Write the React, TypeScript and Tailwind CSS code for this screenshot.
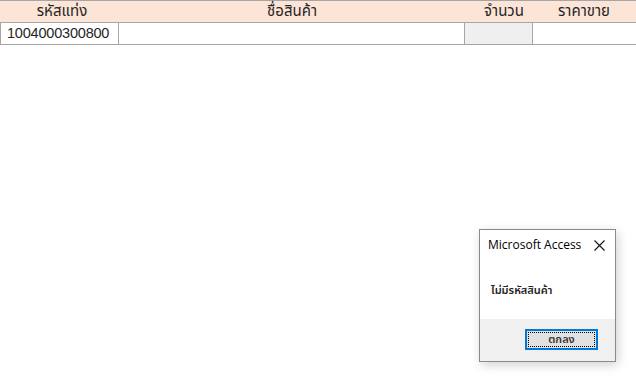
const thai = { fontFamily: 'Tahoma, "Noto Sans Thai", "Noto Sans", "DejaVu Sans", sans-serif' }

export default function App() {
  return (
    <div className="relative w-[636px] h-[385px] bg-white overflow-hidden" style={thai}>
      {/* header row */}
      <div className="flex h-[23px] border-y border-[#a6a6a6] bg-[#fce4d6] text-[15px] leading-[21px] text-[#262626]">
        <div className="w-[118px] text-center pl-[6px]">รหัสแท่ง</div>
        <div className="w-[346px] text-center pl-[2px]">ชื่อสินค้า</div>
        <div className="w-[68px] text-center pl-[12px]">จำนวน</div>
        <div className="w-[104px] text-center">ราคาขาย</div>
      </div>
      {/* data row */}
      <div className="flex h-[22px] border-b border-[#a6a6a6] text-[15px] leading-[21px] text-[#262626]">
        <div
          className="w-[118px] border-l border-[#a6a6a6] pl-[6px] text-[14.5px] tracking-[-0.2px]"
          style={{ fontFamily: '"Liberation Sans", Arial, sans-serif' }}
        >
          1004000300800
        </div>
        <div className="w-[346px] border-l border-[#a6a6a6]"></div>
        <div className="w-[68px] border-l border-[#a6a6a6] bg-[#efefef]"></div>
        <div className="w-[104px] border-l border-[#a6a6a6]"></div>
      </div>

      {/* message box */}
      <div className="absolute left-[479px] top-[229px] w-[137px] h-[133px] border border-[#8a8a8a] bg-white flex flex-col shadow-[2px_3px_10px_rgba(0,0,0,0.18)]">
        <div className="flex items-center justify-between h-[29px] pl-[8px] pr-[10px] pt-[1px]">
          <span className="text-[12px] text-black" style={{ fontFamily: '"Open Sans", "Noto Sans", sans-serif' }}>
            Microsoft Access
          </span>
          <svg width="11" height="11" viewBox="0 0 11 11" className="mt-[1px]">
            <path d="M0.5 0.5L10.5 10.5M10.5 0.5L0.5 10.5" stroke="#111" strokeWidth="1.1" />
          </svg>
        </div>
        <div className="flex-1 pl-[11px] pt-[24px] text-[11px] font-semibold text-[#222]" style={thai}>
          ไม่มีรหัสสินค้า
        </div>
        <div className="h-[42px] bg-[#f0f0f0] flex items-start justify-end pr-[17px] pt-[10px]">
          <button className="w-[73px] h-[21px] border-2 border-[#0078d7] bg-[#e1e1e1] p-[1px]">
            <div className="w-full h-full border border-dotted border-black flex items-center justify-center text-[11px] font-semibold text-[#333] leading-none" style={thai}>
              ตกลง
            </div>
          </button>
        </div>
      </div>
    </div>
  )
}
